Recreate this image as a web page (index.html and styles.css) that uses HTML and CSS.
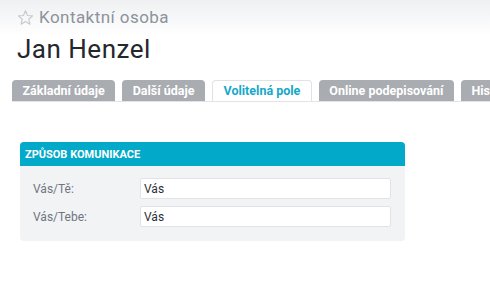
FILE: index.html
```html
<!DOCTYPE html>
<html lang="cs">
<head>
    <meta charset="UTF-8">
    <title>Jan Henzel</title>
    <link rel="stylesheet" href="styles.css">
</head>
<body>
    <header class="page-header">
        <div class="entity-type">
            <svg class="star" width="17" height="17" viewBox="0 0 24 24">
                <path d="M12 2.5l2.9 6.6 7.1.6-5.4 4.7 1.6 7-6.2-3.7-6.2 3.7 1.6-7L2 9.7l7.1-.6z" fill="none" stroke="#c5c9d0" stroke-width="1.6" stroke-linejoin="round"/>
            </svg>
            <span>Kontaktní osoba</span>
        </div>
        <h1 class="entity-name">Jan Henzel</h1>
    </header>

    <nav class="tabs">
        <div class="tab">Základní údaje</div>
        <div class="tab">Další údaje</div>
        <div class="tab active">Volitelná pole</div>
        <div class="tab">Online podepisování</div>
        <div class="tab">Historie</div>
    </nav>

    <section class="panel">
        <div class="panel-title">ZPŮSOB KOMUNIKACE</div>
        <div class="panel-body">
            <div class="field">
                <label>Vás/Tě:</label>
                <input type="text" value="Vás">
            </div>
            <div class="field">
                <label>Vás/Tebe:</label>
                <input type="text" value="Vás">
            </div>
        </div>
    </section>
</body>
</html>
```

FILE: styles.css
```css
body {
    margin: 0;
    font-family: Roboto, "Liberation Sans", sans-serif;
    background: #fff;
    color: #2b2f36;
    overflow: hidden;
}

.page-header {
    background: linear-gradient(#eef0f2, #fff 36px);
    padding: 7px 17px 0;
    height: 72px;
    box-sizing: border-box;
}

.entity-type {
    display: flex;
    align-items: center;
    gap: 5px;
    color: #8d929b;
    font-size: 17px;
    letter-spacing: 0.45px;
    height: 20px;
}

.entity-name {
    margin: 6px 0 0;
    font-size: 26px;
    font-weight: 400;
    letter-spacing: 0.5px;
    color: #23272e;
    line-height: 32px;
}

.tabs {
    display: flex;
    gap: 7px;
    margin: 8px 0 0 12px;
    border-bottom: 1px solid #e1e3e6;
    white-space: nowrap;
    overflow: hidden;
}

.tab {
    flex: none;
    height: 21px;
    line-height: 22px;
    padding: 0 10.5px;
    background: #a9acb1;
    color: #fff;
    font-size: 12.5px;
    font-weight: 700;
    border-radius: 4px 4px 0 0;
    box-sizing: border-box;
}

.tab.active {
    background: #fff;
    color: #17a8c9;
    border: 1px solid #dfe2e6;
    border-bottom: none;
    line-height: 20px;
}

.panel {
    margin: 40px 0 0 20px;
    width: 385px;
    background: #f2f3f5;
    border-radius: 4px;
}

.panel-title {
    background: #02a9c9;
    color: #fff;
    font-size: 11px;
    font-weight: 700;
    height: 24px;
    line-height: 25px;
    padding: 0 5px;
    border-radius: 4px 4px 0 0;
}

.panel-body {
    padding: 12px 14px 14px 13px;
    display: flex;
    flex-direction: column;
    gap: 7px;
}

.field {
    display: flex;
    align-items: center;
}

.field label {
    width: 107px;
    font-size: 12px;
    color: #6f7580;
}

.field input {
    width: 251px;
    height: 21px;
    box-sizing: border-box;
    border: 1px solid #e1e3e8;
    border-radius: 2px;
    padding: 0 3px;
    font-family: Roboto, sans-serif;
    font-size: 12px;
    color: #2b2f36;
    background: #fff;
}
```
